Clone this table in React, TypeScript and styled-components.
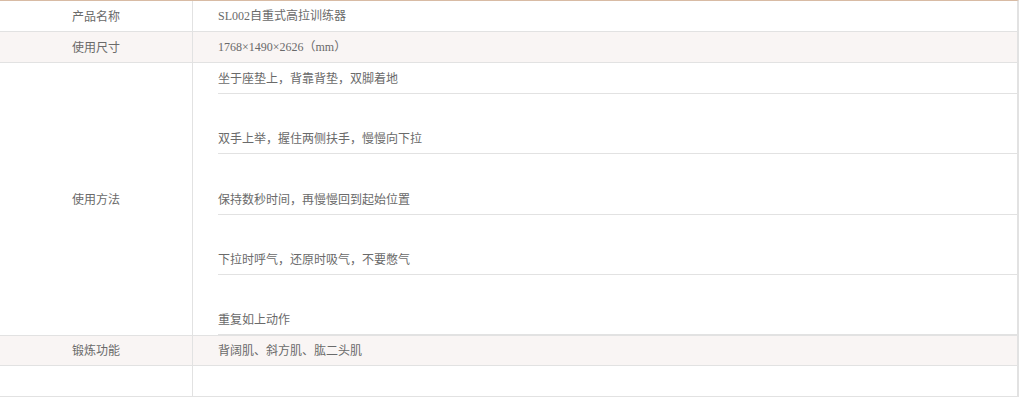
import React from "react";
import styled, { createGlobalStyle } from "styled-components";

const Global = createGlobalStyle`
  html, body { margin: 0; padding: 0; background: #fff; }
  body { font-family: "Noto Sans CJK SC", sans-serif; }
`;

const Table = styled.div`
  width: 1017px;
  border-top: 1px solid #d8bba4;
  border-right: 2px solid #e2e2e2;
`;

const Row = styled.div<{ $shade?: boolean }>`
  display: grid;
  grid-template-columns: 193px 1fr;
  border-bottom: 1px solid #e2e2e2;
  background: ${(p) => (p.$shade ? "#f9f5f4" : "#fff")};
`;

const Label = styled.div<{ $h?: number }>`
  box-sizing: border-box;
  border-right: 1px solid #e2e2e2;
  display: flex;
  align-items: center;
  justify-content: center;
  padding-bottom: 2px;
  min-height: ${(p) => p.$h ?? 30}px;
  font-family: "Noto Sans CJK SC", sans-serif;
  font-size: 12px;
  color: #6a6a6a;
`;

const Value = styled.div<{ $h?: number }>`
  box-sizing: border-box;
  display: flex;
  align-items: center;
  padding-left: 25px;
  padding-bottom: 2px;
  min-height: ${(p) => p.$h ?? 30}px;
  font-family: "Liberation Serif", "Noto Sans CJK SC", serif;
  font-size: 12px;
  color: #6a6a6a;
`;

const Steps = styled.div`
  padding-left: 25px;
  display: flex;
  flex-direction: column;
`;

const Step = styled.div<{ $gap: number; $h: number }>`
  margin-top: ${(p) => p.$gap}px;
  height: ${(p) => p.$h - 1}px;
  padding-bottom: 1px;
  line-height: ${(p) => p.$h - 1}px;
  border-bottom: 1px solid #e2e2e2;
  font-family: "Noto Sans CJK SC", sans-serif;
  font-size: 12px;
  color: #6a6a6a;
  white-space: nowrap;
`;

const steps = [
  { text: "坐于座垫上，背靠背垫，双脚着地", gap: 0, h: 30 },
  { text: "双手上举，握住两侧扶手，慢慢向下拉", gap: 30, h: 29 },
  { text: "保持数秒时间，再慢慢回到起始位置", gap: 30, h: 30 },
  { text: "下拉时呼气，还原时吸气，不要憋气", gap: 30, h: 29 },
  { text: "重复如上动作", gap: 30, h: 29 },
];

export default function App() {
  return (
    <>
      <Global />
      <Table>
        <Row>
          <Label>产品名称</Label>
          <Value>SL002自重式高拉训练器</Value>
        </Row>
        <Row $shade>
          <Label>使用尺寸</Label>
          <Value>1768×1490×2626（mm）</Value>
        </Row>
        <Row>
          <Label>使用方法</Label>
          <Steps>
            {steps.map((s) => (
              <Step key={s.text} $gap={s.gap} $h={s.h}>
                {s.text}
              </Step>
            ))}
          </Steps>
        </Row>
        <Row $shade>
          <Label $h={29}>锻炼功能</Label>
          <Value $h={29}>背阔肌、斜方肌、肱二头肌</Value>
        </Row>
        <Row>
          <Label />
          <Value />
        </Row>
      </Table>
    </>
  );
}
